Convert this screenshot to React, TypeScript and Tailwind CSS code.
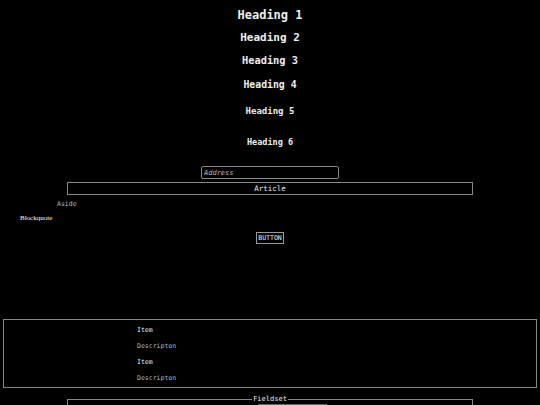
import React from "react";

const mono = "font-['DejaVu_Sans_Mono',monospace]";

export default function App() {
  return (
    <div className={`min-h-[405px] bg-black text-[#eeeeee] ${mono} overflow-hidden`}>
      {/* headings */}
      <div className="flex flex-col items-center font-bold">
        <h1 className="mt-[6px] text-[12px] leading-[18px]">Heading 1</h1>
        <h2 className="mt-[5px] text-[11px] leading-[18px]">Heading 2</h2>
        <h3 className="mt-[5px] text-[10.3px] leading-[16px]">Heading 3</h3>
        <h4 className="mt-[10px] text-[9.8px] leading-[14px]">Heading 4</h4>
        <h5 className="mt-[12px] text-[9px] leading-[14px]">Heading 5</h5>
        <h6 className="mt-[18px] mb-[-1px] text-[8.5px] leading-[12px]">Heading 6</h6>
      </div>

      <div className="mt-[19px] flex justify-center">
        <input
          placeholder="Address"
          className="w-[138px] h-[13px] border border-[#888] rounded-[2px] bg-black px-[2px] text-[7px] italic placeholder:text-[#bbbbbb] outline-none"
        />
      </div>

      <div className="mx-[67px] mt-[3px] h-[13px] border border-[#888] flex items-center justify-center text-[7.5px]">
        Article
      </div>

      <aside className="mt-[4px] ml-[57px] h-[10px] leading-[10px] text-[6.5px] text-[#a9bccb]">Aside</aside>

      <blockquote className="mt-[4px] ml-[20px] h-[10px] leading-[10px] text-[7px] text-white font-['Liberation_Serif',serif]">
        Blockquote
      </blockquote>

      <div className="mt-[9px] flex justify-center">
        <button className="h-[12px] px-[1px] border border-[#999] text-[6.5px] leading-[10px] text-[#eeeeee]">
          BUTTON
        </button>
      </div>

      <dl className="mt-[75px] mx-[3px] h-[69px] border border-[#888] pl-[133px] pt-[5px] text-[6.5px]">
        <dt className="h-[16px] leading-[10px]">Item</dt>
        <dd className="h-[16px] leading-[10px] text-[#a9bccb]">Descripton</dd>
        <dt className="h-[16px] leading-[10px]">Item</dt>
        <dd className="h-[16px] leading-[10px] text-[#a9bccb]">Descripton</dd>
      </dl>

      <fieldset className="mt-[7px] mx-[67px] border border-[#888] px-[10px] pt-[1px]">
        <legend className="mx-auto px-[1px] text-[7px] leading-[8px]">Fieldset</legend>
        <input className="block ml-[180px] w-[69px] h-[12px] border border-[#666] bg-black" />
      </fieldset>
    </div>
  );
}
